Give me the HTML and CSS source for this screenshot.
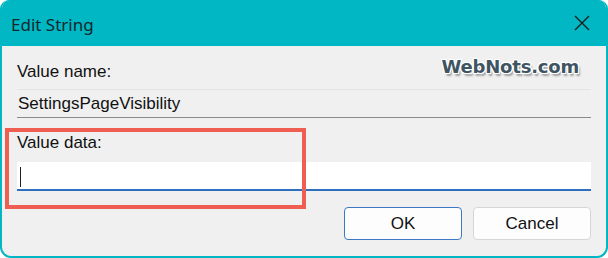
FILE: index.html
```html
<!DOCTYPE html>
<html>
<head>
<meta charset="utf-8">
<link rel="stylesheet" href="styles.css">
</head>
<body>
<div class="window">
  <div class="titlebar">
    <span class="title">Edit String</span>
    <svg class="close" width="16" height="16" viewBox="0 0 16 16"><path d="M1 1 L15 15 M15 1 L1 15" stroke="#1c1c1c" stroke-width="1.3" fill="none"/></svg>
  </div>
  <div class="content">
    <div class="watermark">WebNots.com</div>
    <div class="label">Value name:</div>
    <div class="field name">SettingsPageVisibility</div>
    <div class="label data-label">Value data:</div>
    <div class="field data"><span class="caret"></span></div>
    <div class="buttons">
      <button class="btn default">OK</button>
      <button class="btn">Cancel</button>
    </div>
    <div class="highlight"></div>
  </div>
</div>
</body>
</html>
```
FILE: styles.css
```css
html, body {
  margin: 0;
  padding: 0;
  background: #ffffff;
}
.window {
  width: 608px;
  height: 258px;
  box-sizing: border-box;
  border: 2px solid #00b7c3;
  border-top: 0;
  border-radius: 9px 9px 11px 11px;
  background: #f0f0f0;
  overflow: hidden;
  display: flex;
  flex-direction: column;
  font-family: "Liberation Sans", Arial, sans-serif;
  font-size: 17px;
  color: #111;
}
.titlebar {
  height: 46px;
  background: #00b7c3;
  display: flex;
  align-items: center;
  justify-content: space-between;
  padding: 0 16px 0 9px;
  flex-shrink: 0;
}
.title {
  font-family: "Noto Sans", "Open Sans", sans-serif;
  font-size: 17px;
  color: #14282b;
  margin-top: 2px;
}
.close {
  display: block;
}
.content {
  position: relative;
  flex: 1;
  padding: 16px 15px 0 15px;
  display: flex;
  flex-direction: column;
}
.label {
  height: 19px;
  line-height: 19px;
}
.field {
  height: 29px;
  box-sizing: border-box;
  margin-top: 8px;
  padding-left: 1px;
  display: flex;
  align-items: center;
}
.name {
  border-top: 1px solid #e4e4e4;
  border-bottom: 1px solid #8a8a8a;
  background: #f0f0f0;
}
.data-label {
  margin-top: 15px;
}
.data {
  margin-top: 10px;
  padding-left: 3px;
  background: #ffffff;
  border-bottom: 2px solid #2f6fbf;
}
.caret {
  width: 1px;
  height: 20px;
  background: #222;
  margin-top: 2px;
}
.buttons {
  display: flex;
  justify-content: flex-end;
  gap: 11px;
  margin-top: 16px;
}
.btn {
  width: 118px;
  height: 33px;
  box-sizing: border-box;
  font-family: "Liberation Sans", Arial, sans-serif;
  font-size: 17px;
  color: #111;
  background: #fdfdfd;
  border: 1px solid #d6d6d6;
  border-radius: 4px;
  padding: 0;
}
.btn.default {
  border-color: #3d78c4;
}
.watermark {
  position: absolute;
  right: 27px;
  top: 10px;
  font-family: "DejaVu Sans", sans-serif;
  font-weight: bold;
  font-size: 18px;
  letter-spacing: -0.2px;
  color: #3e5462;
  text-shadow:
    1px 0 0 #fff, -1px 0 0 #fff, 0 1px 0 #fff, 0 -1px 0 #fff,
    1px 1px 0 #fff, -1px -1px 0 #fff, 1px -1px 0 #fff, -1px 1px 0 #fff,
    2px 3px 2px rgba(0,0,0,0.35);
}
.highlight {
  position: absolute;
  left: 3px;
  top: 82px;
  width: 301px;
  height: 81px;
  box-sizing: border-box;
  border: 4px solid #ee5e52;
}
```
